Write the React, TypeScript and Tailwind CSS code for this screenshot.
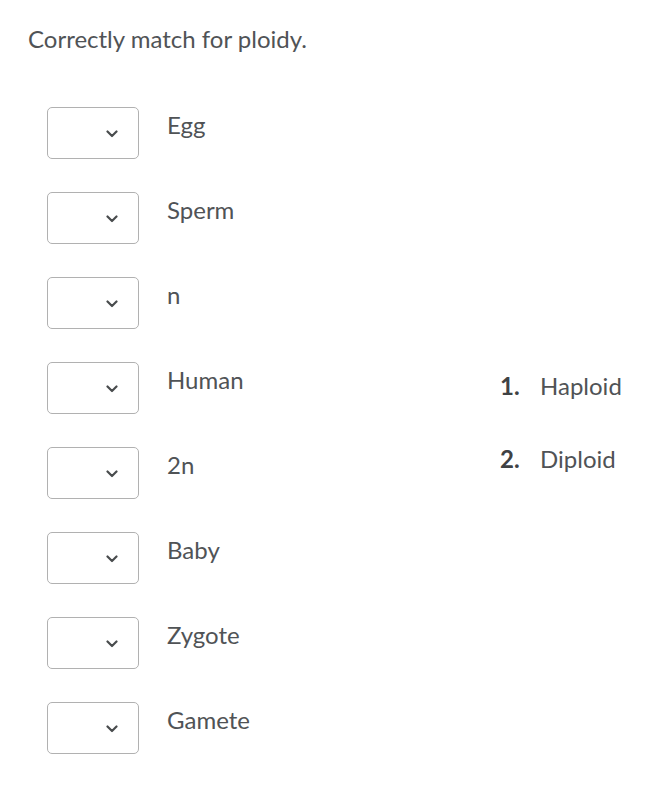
import React from "react";

const items = ["Egg", "Sperm", "n", "Human", "2n", "Baby", "Zygote", "Gamete"];

function Chevron() {
  return (
    <svg width="12" height="8" viewBox="0 0 12 8" fill="none">
      <path d="M1.5 1.5 L6 6 L10.5 1.5" stroke="#494c4e" strokeWidth="2.2" strokeLinecap="round" strokeLinejoin="round" />
    </svg>
  );
}

export default function App() {
  return (
    <div className="w-[660px] h-[792px] bg-white text-[#505356]" style={{ fontFamily: "Lato, 'Noto Sans', sans-serif" }}>
      <div className="pl-[28px] pt-[23px] text-[24px] leading-[32px]">Correctly match for ploidy.</div>
      <div className="flex mt-[52px]">
        <div className="w-[500px] flex flex-col gap-[33px] pl-[47px]">
          {items.map((it) => (
            <div key={it} className="flex items-start">
              <div className="w-[92px] h-[52px] rounded-[5px] border border-[#b1b1b1] flex items-center justify-end pr-[20px] pt-[2px]">
                <Chevron />
              </div>
              <div className="ml-[28px] mt-[3px] text-[24px] leading-[30px]">{it}</div>
            </div>
          ))}
        </div>
        <div className="flex flex-col mt-[264px] gap-[43px] text-[24px] leading-[30px]">
          <div className="flex"><span className="w-[40px] font-bold text-[#3f4244]">1.</span><span>Haploid</span></div>
          <div className="flex"><span className="w-[40px] font-bold text-[#3f4244]">2.</span><span>Diploid</span></div>
        </div>
      </div>
    </div>
  );
}
